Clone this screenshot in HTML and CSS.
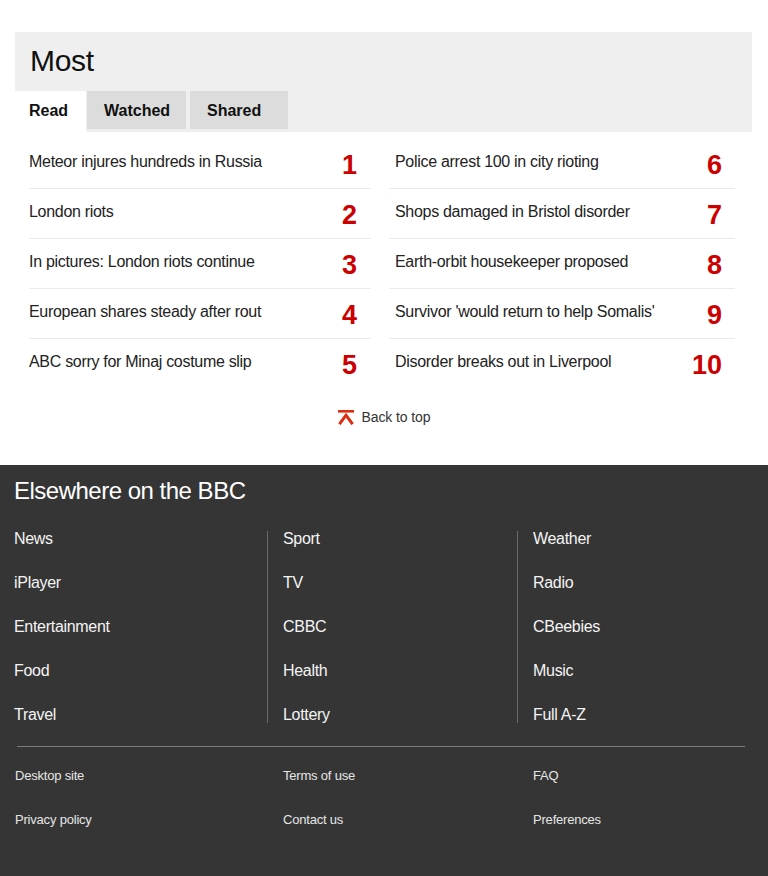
FILE: index.html
```html
<!DOCTYPE html>
<html lang="en">
<head>
<meta charset="utf-8">
<title>Most - BBC</title>
<link rel="stylesheet" href="styles.css">
</head>
<body>
<section class="most">
  <div class="most-head">
    <h2 class="most-title">Most</h2>
    <div class="tabs">
      <span class="tab tab-active">Read</span>
      <span class="tab">Watched</span>
      <span class="tab tab-last">Shared</span>
    </div>
  </div>
  <div class="list">
    <ol class="col col-left">
      <li class="row"><span class="headline">Meteor injures hundreds in Russia</span><span class="num">1</span></li>
      <li class="row"><span class="headline">London riots</span><span class="num">2</span></li>
      <li class="row"><span class="headline">In pictures: London riots continue</span><span class="num">3</span></li>
      <li class="row"><span class="headline">European shares steady after rout</span><span class="num">4</span></li>
      <li class="row"><span class="headline">ABC sorry for Minaj costume slip</span><span class="num">5</span></li>
    </ol>
    <ol class="col col-right">
      <li class="row"><span class="headline">Police arrest 100 in city rioting</span><span class="num">6</span></li>
      <li class="row"><span class="headline">Shops damaged in Bristol disorder</span><span class="num">7</span></li>
      <li class="row"><span class="headline">Earth-orbit housekeeper proposed</span><span class="num">8</span></li>
      <li class="row"><span class="headline">Survivor 'would return to help Somalis'</span><span class="num">9</span></li>
      <li class="row"><span class="headline">Disorder breaks out in Liverpool</span><span class="num">10</span></li>
    </ol>
  </div>
</section>
<div class="back-top">
  <svg class="back-icon" width="16" height="15" viewBox="0 0 16 15"><rect x="0" y="0" width="16" height="2.6" fill="#dd2c10"/><path d="M1.4 14.2 L8 5.2 L14.6 14.2" fill="none" stroke="#dd2c10" stroke-width="3"/></svg>
  <span>Back to top</span>
</div>
<footer class="footer">
  <h2 class="footer-title">Elsewhere on the BBC</h2>
  <div class="links">
    <ul class="link-col">
      <li>News</li><li>iPlayer</li><li>Entertainment</li><li>Food</li><li>Travel</li>
    </ul>
    <ul class="link-col link-col-div">
      <li>Sport</li><li>TV</li><li>CBBC</li><li>Health</li><li>Lottery</li>
    </ul>
    <ul class="link-col link-col-div">
      <li>Weather</li><li>Radio</li><li>CBeebies</li><li>Music</li><li>Full A-Z</li>
    </ul>
  </div>
  <div class="rule"></div>
  <div class="small-links">
    <span>Desktop site</span><span>Terms of use</span><span>FAQ</span>
    <span>Privacy policy</span><span>Contact us</span><span>Preferences</span>
  </div>
</footer>
</body>
</html>
```

FILE: styles.css
```css
* { box-sizing: border-box; }
html, body { margin: 0; padding: 0; }
body {
  background: #fff;
  font-family: "Liberation Sans", Arial, Helvetica, sans-serif;
  color: #222;
  padding-top: 32px;
}
.most { margin: 0 16px 0 15px; }
.most-head {
  background: #f0eff0;
  padding: 11px 0 3px 0;
}
.most-title {
  margin: 0 0 12px 15px;
  font-size: 30px;
  line-height: 36px;
  font-weight: normal;
  color: #111;
  letter-spacing: -0.3px;
}
.tabs { display: flex; }
.tab {
  display: block;
  width: 99px;
  height: 38px;
  line-height: 39px;
  padding: 0 0 0 17px;
  margin-right: 4px;
  font-size: 16px;
  font-weight: bold;
  color: #111;
  background: #dcdcdc;
}
.tab-last { width: 98px; }
.tab-active {
  width: 71px;
  background: #fff;
  padding-left: 14px;
  margin-right: 1px;
  height: 41px;
  margin-bottom: -3px;
}
.list {
  display: grid;
  grid-template-columns: 342px 346px;
  column-gap: 18px;
  padding: 7px 0 0 14px;
}
.col { list-style: none; margin: 0; padding: 0; }
.row {
  display: flex;
  justify-content: space-between;
  align-items: flex-start;
  height: 50px;
  padding: 13px 14px 0 0;
  border-bottom: 1px solid #ebebeb;
}
.col-right .row { padding-left: 6px; padding-right: 13px; }
.row:last-child { border-bottom: none; }
.headline { font-size: 16px; line-height: 20px; color: #222; letter-spacing: -0.3px; }
.num {
  font-size: 27px;
  line-height: 28px;
  font-weight: bold;
  color: #cc0000;
  margin-top: -1px;
}
.back-top {
  display: flex;
  justify-content: center;
  align-items: center;
  gap: 8px;
  margin: 18px 0 38px 0;
  height: 20px;
  font-size: 14px;
  color: #333;
  letter-spacing: -0.1px;
}
.back-icon { display: block; }
.footer {
  background: #353535;
  color: #fff;
  padding: 12px 0 0 0;
  min-height: 411px;
}
.footer-title {
  margin: 0 0 26px 14px;
  font-size: 24px;
  line-height: 28px;
  font-weight: normal;
  color: #fff;
  letter-spacing: -0.5px;
}
.links {
  display: grid;
  grid-template-columns: 253px 250px 1fr;
  padding-left: 14px;
}
.link-col {
  list-style: none;
  margin: 0;
  padding: 0;
  display: flex;
  flex-direction: column;
  gap: 28px;
}
.link-col li { font-size: 16px; line-height: 16px; color: #f4f4f4; letter-spacing: -0.3px; }
.link-col-div { border-left: 1px solid #6a6a6a; padding-left: 15px; }
.rule {
  margin: 23px 23px 0 17px;
  border-top: 1px solid #7a7a7a;
}
.small-links {
  display: grid;
  grid-template-columns: 268px 250px 1fr;
  row-gap: 28px;
  padding: 21px 0 0 15px;
}
.small-links span { font-size: 13px; line-height: 16px; color: #e6e6e6; letter-spacing: -0.2px; }
```
